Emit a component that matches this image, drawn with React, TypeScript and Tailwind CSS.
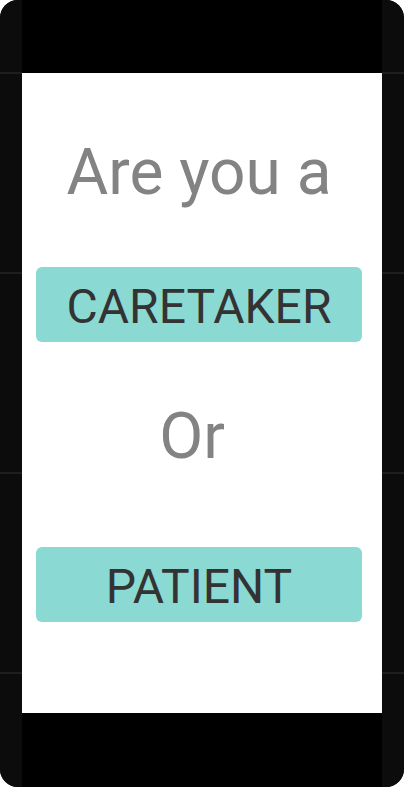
import React from "react";

function Strip() {
  return (
    <div className="flex w-[22px] flex-col bg-[#0c0c0c]">
      <div className="h-[72px]" />
      <div className="h-[2px] bg-[#1e1e1e]" />
      <div className="h-[198px]" />
      <div className="h-[2px] bg-[#1e1e1e]" />
      <div className="h-[198px]" />
      <div className="h-[2px] bg-[#1e1e1e]" />
      <div className="h-[198px]" />
      <div className="h-[2px] bg-[#1e1e1e]" />
      <div className="flex-1" />
    </div>
  );
}

export default function App() {
  return (
    <div className="h-[787px] w-[404px] bg-white" style={{ fontFamily: "Roboto, 'Noto Sans', sans-serif" }}>
      <div className="flex h-[787px] w-[404px] overflow-hidden rounded-[18px] bg-[#0c0c0c]">
        <Strip />
        <div className="flex w-[360px] flex-col bg-black">
          <div className="h-[73px]" />
          <div className="flex h-[640px] flex-col items-center bg-white pl-[14px] pr-[20px] pt-[68px]">
            <div className="text-[64px] leading-none text-[#838383]">Are you a</div>
            <button className="mt-[62px] flex h-[75px] w-full items-center justify-center rounded-[6px] bg-[#8bd9d3] pt-[4px] text-[48px] leading-none text-[#333333]">
              CARETAKER
            </button>
            <div className="mt-[63px] pr-[14px] text-[64px] leading-none text-[#838383]">Or</div>
            <button className="mt-[78px] flex h-[75px] w-full items-center justify-center rounded-[6px] bg-[#8bd9d3] pt-[4px] text-[48px] leading-none text-[#333333]">
              PATIENT
            </button>
          </div>
          <div className="flex-1" />
        </div>
        <Strip />
      </div>
    </div>
  );
}
